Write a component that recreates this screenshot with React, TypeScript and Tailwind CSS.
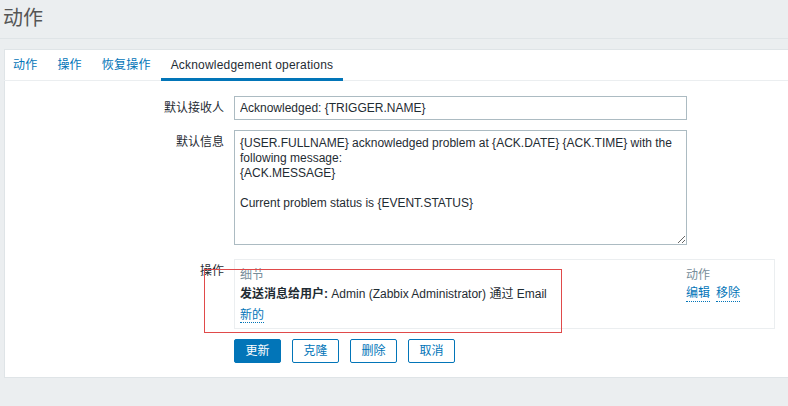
import React from 'react';

const tabs = ['动作', '操作', '恢复操作', 'Acknowledgement operations'];

const defaultMessage =
    '{USER.FULLNAME} acknowledged problem at {ACK.DATE} {ACK.TIME} with the\nfollowing message:\n{ACK.MESSAGE}\n\nCurrent problem status is {EVENT.STATUS}';

function FormRow({ label, children }: { label: string; children: React.ReactNode }) {
    return (
        <div className="flex">
            <div className="w-[229px] shrink-0 pr-[10px] text-right leading-[24px]">{label}</div>
            <div>{children}</div>
        </div>
    );
}

export default function App() {
    const active = 3;

    return (
        <div className="relative w-[788px] h-[406px] overflow-hidden bg-[#ebeef0] text-[12px] text-[#1f2c33] font-['Liberation_Sans','Noto_Sans_CJK_SC',sans-serif]">
            <header className="h-[39px] border-b border-[#dfe4e7] pl-[3px] pt-[8px]">
                <h1 className="text-[20px] leading-[20px] font-normal text-[#555]">动作</h1>
            </header>

            <div className="mt-[10px] ml-[4px] bg-white border border-r-0 border-[#dfe4e7] pb-[14px]">
                <ul className="flex h-[31px] border-b border-[#ebeef0] -ml-[2px]">
                    {tabs.map((tab, i) => (
                        <li
                            key={tab}
                            className={`relative flex items-center px-[10px] tracking-[0.2px] ${i === active ? 'text-[#1f2c33]' : 'text-[#0275b8]'}`}
                        >
                            {tab}
                            {i === active && (
                                <span className="absolute left-0 right-0 -bottom-px h-[3px] bg-[#0275b8]" />
                            )}
                        </li>
                    ))}
                </ul>

                <div className="pt-[15px] flex flex-col">
                    <FormRow label="默认接收人">
                        <input
                            type="text"
                            defaultValue="Acknowledged: {TRIGGER.NAME}"
                            className="w-[453px] h-[24px] border border-[#acbbc2] px-[5px] outline-none text-[#1f2c33]"
                        />
                    </FormRow>

                    <div className="mt-[10px]">
                        <FormRow label="默认信息">
                            <textarea
                                defaultValue={defaultMessage}
                                className="block w-[453px] h-[115px] border border-[#acbbc2] px-[5px] pt-[5px] leading-[15px] outline-none text-[#1f2c33]"
                            />
                        </FormRow>
                    </div>

                    <div className="mt-[14px]">
                        <FormRow label="操作">
                            <div className="w-[541px] border border-[#ebeef0] px-[5px] pt-[5px] pb-[4px]">
                                <div className="grid grid-cols-[446px_1fr] h-[20px] leading-[20px] text-[#768d99]">
                                    <span>细节</span>
                                    <span>动作</span>
                                </div>
                                <div className="grid grid-cols-[446px_1fr] h-[18px] leading-[18px]">
                                    <span>
                                        <b className="font-bold">发送消息给用户:</b> Admin (Zabbix Administrator) 通过 Email
                                    </span>
                                    <span className="flex gap-[6px]">
                                        <a className="text-[#0275b8] border-b border-dotted border-[#0275b8] leading-[16px] h-[17px]">编辑</a>
                                        <a className="text-[#0275b8] border-b border-dotted border-[#0275b8] leading-[16px] h-[17px]">移除</a>
                                    </span>
                                </div>
                                <div className="mt-[3px] h-[18px] leading-[18px]">
                                    <a className="text-[#0275b8] border-b border-dotted border-[#0275b8]">新的</a>
                                </div>
                            </div>
                        </FormRow>
                    </div>

                    <div className="mt-[10px] pl-[229px] flex gap-[11px]">
                        <button className="w-[47px] h-[24px] rounded-[2px] bg-[#0275b8] border border-[#0275b8] text-white">更新</button>
                        <button className="w-[47px] h-[24px] rounded-[2px] bg-white border border-[#0275b8] text-[#0275b8]">克隆</button>
                        <button className="w-[47px] h-[24px] rounded-[2px] bg-white border border-[#0275b8] text-[#0275b8]">删除</button>
                        <button className="w-[47px] h-[24px] rounded-[2px] bg-white border border-[#0275b8] text-[#0275b8]">取消</button>
                    </div>
                </div>
            </div>

            <div className="absolute left-[204px] top-[269px] w-[358px] h-[64px] border border-[#e04a4a] pointer-events-none" />
        </div>
    );
}
